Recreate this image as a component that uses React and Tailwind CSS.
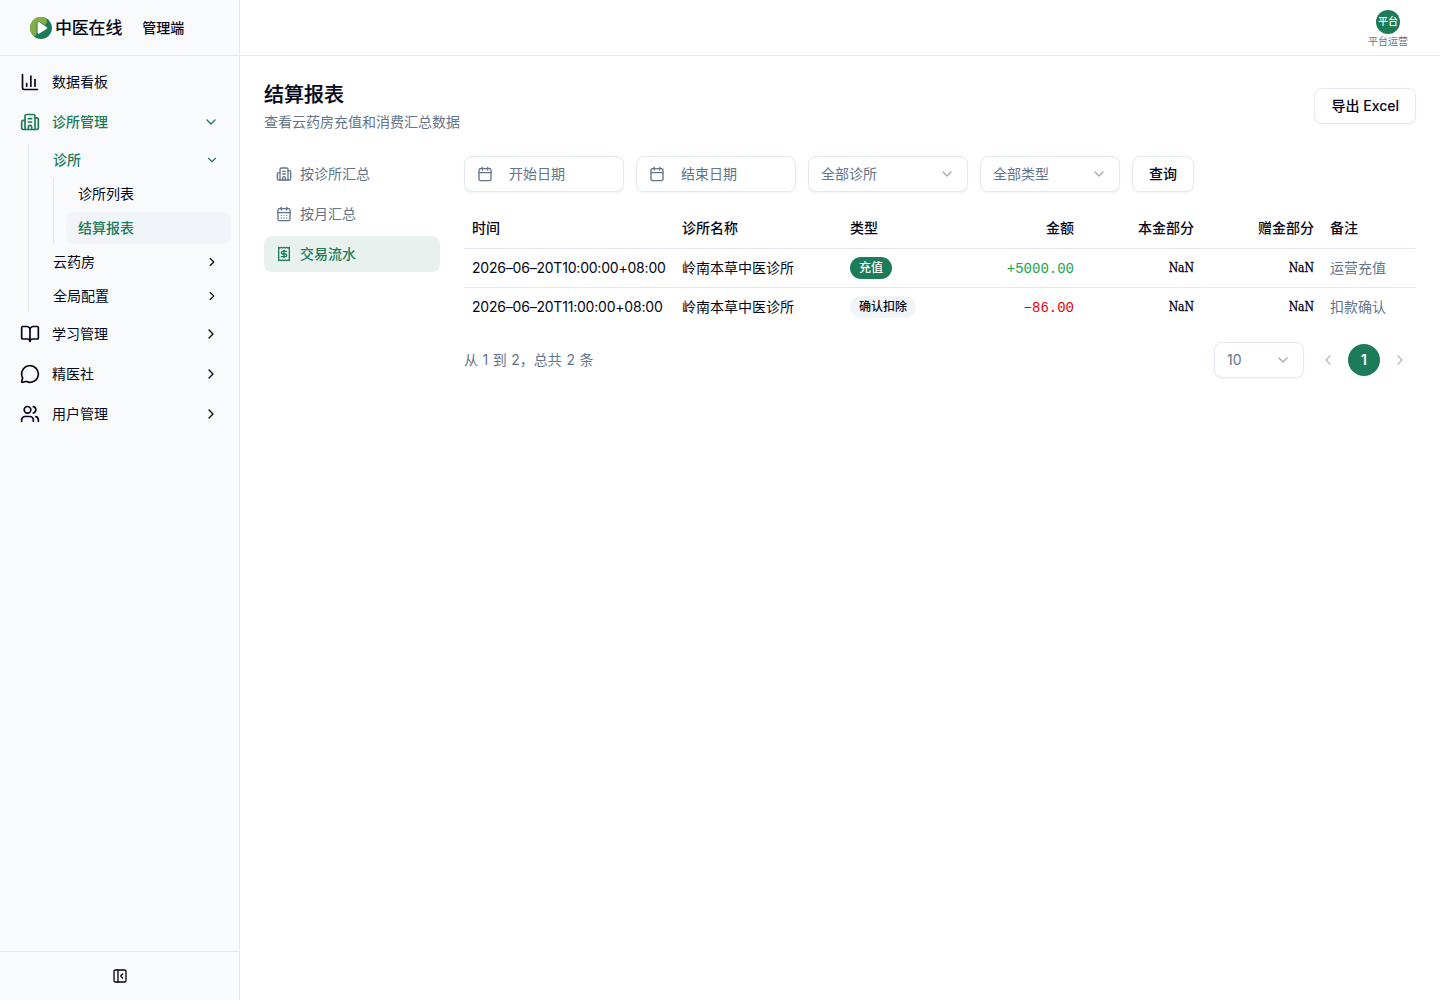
import React, { useState } from "react";
import {
  BookOpen,
  Building2,
  Calendar,
  CalendarDays,
  ChartColumn,
  ChevronDown,
  ChevronLeft,
  ChevronRight,
  MessageCircle,
  PanelLeftClose,
  Receipt,
  Users,
} from "lucide-react";

const rows = [
  {
    time: "2026–06–20T10:00:00+08:00",
    clinic: "岭南本草中医诊所",
    type: "recharge",
    label: "充值",
    amount: 5000,
    remark: "运营充值",
  },
  {
    time: "2026–06–20T11:00:00+08:00",
    clinic: "岭南本草中医诊所",
    type: "deduct",
    label: "确认扣除",
    amount: -86,
    remark: "扣款确认",
  },
];

const formatAmount = (n) => (n > 0 ? "+" : "−") + Math.abs(n).toFixed(2);

function Logo() {
  return (
    <svg viewBox="0 0 22 22" className="size-[22px] shrink-0">
      <circle cx="11" cy="11" r="11" fill="#1c7c59" />
      <path d="M11 0A11 11 0 0 0 4.2 19.6C6 18.6 6.600 17 6.600 15V6.500C6.600 5 8.300 4.100 9.600 4.900L15 8C17.200 6 17.500 3 15.500 1A11 11 0 0 0 11 0Z" fill="#84ad45" />
      <path d="M7.600 6.300c0-1 .9-1.500 1.700-1l7.200 4.600c.8.500.8 1.500 0 2l-7.200 4.600c-.8.500-1.700 0-1.700-1Z" fill="#fff" />
    </svg>
  );
}

function NavItem({ icon: Icon, label, open, active, leaf }) {
  const Chevron = open ? ChevronDown : ChevronRight;
  return (
    <button className={`flex h-10 w-full items-center gap-3 pl-5 pr-5 text-sm ${active ? "font-medium text-[#1c7c59]" : ""}`}>
      <Icon className="size-5" />
      <span className="flex-1 text-left">{label}</span>
      {!leaf && <Chevron className="size-4" />}
    </button>
  );
}

function SubItem({ label, open }) {
  const Chevron = open ? ChevronDown : ChevronRight;
  return (
    <button className={`flex h-8 w-full items-center justify-between pl-6 pr-5 text-sm ${open ? "font-medium text-[#1c7c59]" : ""}`}>
      {label}
      <Chevron className="size-3.5" />
    </button>
  );
}

function Sidebar() {
  return (
    <aside className="flex w-60 shrink-0 flex-col border-r border-[#e2e8f0] bg-[#f9fafc]">
      <div className="flex h-14 items-center border-b border-[#e2e8f0] pl-[30px]">
        <Logo />
        <span className="ml-[3px] pt-0.5 text-[17px] font-medium tracking-[-0.2px]">中医在线</span>
        <span className="ml-5 text-sm font-medium">管理端</span>
      </div>
      <nav className="flex-1 pt-1.5">
        <NavItem icon={ChartColumn} label="数据看板" leaf />
        <NavItem icon={Building2} label="诊所管理" open active />
        <div className="ml-7 mt-0.5 mb-0.5 flex flex-col gap-0.5 border-l border-[#e2e8f0]">
          <SubItem label="诊所" open />
          <div className="ml-6 flex flex-col gap-0.5 border-l border-[#e2e8f0] pl-3 pr-2">
            <a className="flex h-8 items-center rounded-md px-3 text-sm">诊所列表</a>
            <a className="flex h-8 items-center rounded-lg bg-[#f1f5f9] px-3 text-sm font-medium text-[#1c7c59]">结算报表</a>
          </div>
          <SubItem label="云药房" />
          <SubItem label="全局配置" />
        </div>
        <NavItem icon={BookOpen} label="学习管理" />
        <NavItem icon={MessageCircle} label="精医社" />
        <NavItem icon={Users} label="用户管理" />
      </nav>
      <div className="flex h-[49px] items-center justify-center border-t border-[#e2e8f0]">
        <PanelLeftClose className="size-4" />
      </div>
    </aside>
  );
}

function DateInput({ placeholder }) {
  return (
    <button className="flex h-9 w-40 items-center gap-4 rounded-lg border border-[#e2e8f0] px-3 text-sm text-[#64748b] shadow-xs">
      <Calendar className="size-4" />
      {placeholder}
    </button>
  );
}

function SelectBox({ value, className }) {
  return (
    <button className={`flex h-9 items-center justify-between rounded-lg border border-[#e2e8f0] px-3 text-sm text-[#64748b] shadow-xs ${className}`}>
      {value}
      <ChevronDown className="size-4 opacity-60" />
    </button>
  );
}

function EmptyAmount() {
  return (
    <td className="pt-0.5 text-right font-['DejaVu_Serif_Condensed','DejaVu_Serif',serif] text-[12px] font-medium [-webkit-text-stroke:0.3px_currentColor]">
      NaN
    </td>
  );
}

function TransactionTable() {
  return (
    <table className="mt-4 w-full table-fixed text-sm">
      <colgroup>
        <col className="w-[210px]" />
        <col className="w-[168px]" />
        <col className="w-[120px]" />
        <col className="w-[120px]" />
        <col className="w-[120px]" />
        <col className="w-[120px]" />
        <col />
      </colgroup>
      <thead>
        <tr className="h-10 border-b border-[#e2e8f0] text-left [&>th]:px-2 [&>th]:font-medium">
          <th>时间</th>
          <th>诊所名称</th>
          <th>类型</th>
          <th className="text-right">金额</th>
          <th className="text-right">本金部分</th>
          <th className="text-right">赠金部分</th>
          <th>备注</th>
        </tr>
      </thead>
      <tbody>
        {rows.map((row) => (
          <tr key={row.time} className="h-[39px] border-b border-[#e2e8f0] whitespace-nowrap last:border-0 [&>td]:px-2">
            <td className="tracking-[-0.21px]">{row.time}</td>
            <td>{row.clinic}</td>
            <td>
              <span
                className={`inline-flex h-[22px] items-center rounded-full px-[9px] align-middle text-xs font-medium ${
                  row.type === "recharge" ? "bg-[#1c7c59] text-white" : "bg-[#f1f5f9]"
                }`}
              >
                {row.label}
              </span>
            </td>
            <td className={`pt-0.5 text-right font-['Liberation_Mono',monospace] ${row.amount > 0 ? "text-[#16a34a]" : "text-[#e7000b]"}`}>
              {formatAmount(row.amount)}
            </td>
            <EmptyAmount />
            <EmptyAmount />
            <td className="text-[#64748b]">{row.remark}</td>
          </tr>
        ))}
      </tbody>
    </table>
  );
}

const tabs = [
  { key: "clinic", label: "按诊所汇总", icon: Building2 },
  { key: "month", label: "按月汇总", icon: CalendarDays },
  { key: "flow", label: "交易流水", icon: Receipt },
];

function App() {
  const [tab, setTab] = useState("flow");

  return (
    <div className="flex h-screen bg-white font-[Inter,'Noto_Sans_CJK_SC',sans-serif] text-[#020618]">
      <Sidebar />
      <div className="flex min-w-0 flex-1 flex-col">
        <header className="flex h-14 items-center justify-end border-b border-[#e2e8f0] pr-8">
          <div className="flex flex-col items-center pt-[3px]">
            <div className="flex size-6 items-center justify-center rounded-full bg-[#1c7c59] text-[10px] font-medium text-white">平台</div>
            <span className="text-[10px] leading-[15px] text-[#64748b]">平台运营</span>
          </div>
        </header>
        <main className="flex-1 p-6">
          <div className="flex items-center justify-between">
            <div>
              <h1 className="pt-0.5 text-xl leading-[26px] font-medium [-webkit-text-stroke:0.2px_currentColor]">结算报表</h1>
              <p className="mt-1 text-sm text-[#64748b]">查看云药房充值和消费汇总数据</p>
            </div>
            <button className="h-9 rounded-lg border border-[#e2e8f0] px-4 text-sm font-medium shadow-xs">导出 Excel</button>
          </div>
          <div className="mt-6 flex gap-6">
            <div className="flex w-44 shrink-0 flex-col gap-1">
              {tabs.map(({ key, label, icon: Icon }) => (
                <button
                  key={key}
                  onClick={() => setTab(key)}
                  className={`flex h-9 items-center gap-2 rounded-lg px-3 text-sm ${
                    tab === key ? "bg-[#e8f1ee] font-medium text-[#1c7c59]" : "text-[#64748b]"
                  }`}
                >
                  <Icon className="size-4" />
                  {label}
                </button>
              ))}
            </div>
            <div className="min-w-0 flex-1">
              <div className="flex gap-3">
                <DateInput placeholder="开始日期" />
                <DateInput placeholder="结束日期" />
                <SelectBox value="全部诊所" className="w-40" />
                <SelectBox value="全部类型" className="w-[140px]" />
                <button className="h-9 rounded-lg border border-[#e2e8f0] px-4 text-sm font-medium shadow-xs">查询</button>
              </div>
              <TransactionTable />
              <div className="mt-4 flex items-center justify-between text-sm text-[#64748b]">
                <span className="[word-spacing:0.6px]">从 1 到 2，总共 2 条</span>
                <div className="flex items-center">
                  <SelectBox value="10" className="w-[90px]" />
                  <div className="ml-2 flex items-center gap-1">
                    <button className="flex size-8 items-center justify-center opacity-50">
                      <ChevronLeft className="size-4" />
                    </button>
                    <button className="flex size-8 items-center justify-center rounded-full bg-[#1c7c59] font-semibold text-white">1</button>
                    <button className="flex size-8 items-center justify-center opacity-50">
                      <ChevronRight className="size-4" />
                    </button>
                  </div>
                </div>
              </div>
            </div>
          </div>
        </main>
      </div>
    </div>
  );
}

export default App;
